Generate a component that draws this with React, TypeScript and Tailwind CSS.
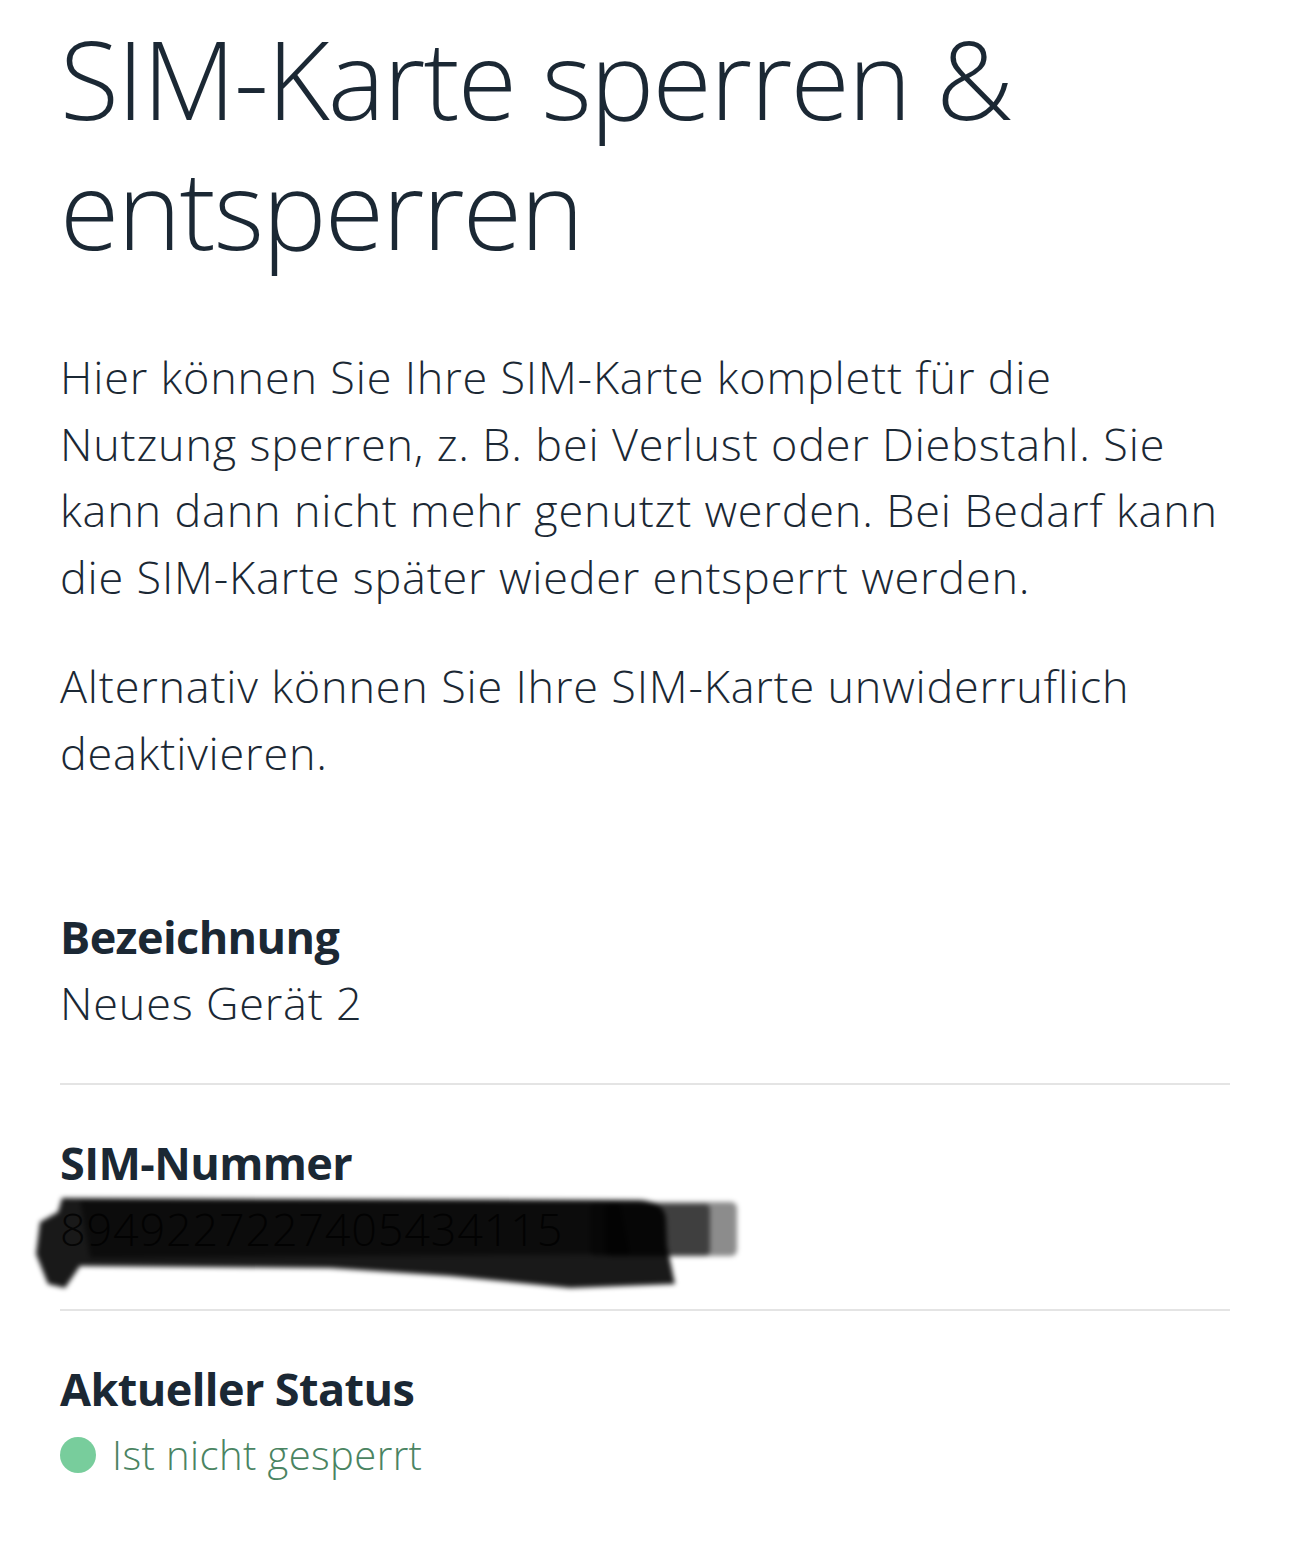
import React from "react";

type Row = {
  label: string;
  value: React.ReactNode;
  last?: boolean;
};

function Redaction() {
  // hand-drawn scribble covering the SIM number
  return (
    <svg
      className="absolute left-[-30px] top-[-12px] pointer-events-none"
      width="730"
      height="110"
      viewBox="0 0 730 110"
    >
      <defs>
        <filter id="blur" x="-10%" y="-20%" width="120%" height="140%">
          <feGaussianBlur stdDeviation="2.5" />
        </filter>
      </defs>
      <g filter="url(#blur)">
        <rect x="560" y="18" width="147" height="54" rx="6" fill="#000" opacity="0.45" />
        <rect x="575" y="20" width="105" height="52" rx="5" fill="#000" opacity="0.55" />
        <path
          d="M32 14 L610 16 Q635 18 636 35 L637 62 L645 100 L540 104 L420 92 L300 84 L50 82 L35 104 L18 100 L6 70 L10 38 L28 28 Z"
          fill="#000"
          opacity="0.9"
        />
        <path d="M50 16 L590 18 L600 70 L60 74 Z" fill="#000" opacity="0.5" />
      </g>
    </svg>
  );
}

function InfoRow({ label, value, last }: Row) {
  return (
    <div className={last ? "pt-[45px]" : "pt-[45px] pb-[47px] border-b-2 border-[#e4e4e4]"}>
      <div className="text-[45px] leading-[66px] font-bold tracking-[-0.6px]">{label}</div>
      <div className="text-[45px] leading-[66px] font-light tracking-[0.8px]">{value}</div>
    </div>
  );
}

export default function App() {
  return (
    <div className="min-h-[1564px] bg-white px-[60px] pt-[14px] font-['Open_Sans',sans-serif] text-[#1b2834]">
      <h1 className="text-[108px] leading-[130px] font-light tracking-[-1.8px]">
        SIM-Karte sperren &amp;
        <br />
        entsperren
      </h1>

      <p className="mt-[70px] text-[45px] leading-[66.7px] font-light tracking-[0.8px]">
        Hier können Sie Ihre SIM-Karte komplett für die
        <br />
        Nutzung sperren, z. B. bei Verlust oder Diebstahl. Sie
        <br />
        kann dann nicht mehr genutzt werden. Bei Bedarf kann
        <br />
        die SIM-Karte später wieder entsperrt werden.
      </p>

      <p className="mt-[42px] text-[45px] leading-[66.7px] font-light tracking-[0.8px]">
        Alternativ können Sie Ihre SIM-Karte unwiderruflich
        <br />
        deaktivieren.
      </p>

      <div className="mt-[73px]">
        <InfoRow label="Bezeichnung" value="Neues Gerät 2" />
        <InfoRow
          label="SIM-Nummer"
          value={
            <span className="relative inline-block text-[#333]">
              8949227227405434115
              <Redaction />
            </span>
          }
        />
        <InfoRow
          label="Aktueller Status"
          last
          value={
            <span className="flex items-center gap-[16px] text-[40px] tracking-[0.4px] text-[#4a8462]">
              <span className="w-[36px] h-[36px] rounded-full bg-[#78cd9c]" />
              Ist nicht gesperrt
            </span>
          }
        />
      </div>
    </div>
  );
}
